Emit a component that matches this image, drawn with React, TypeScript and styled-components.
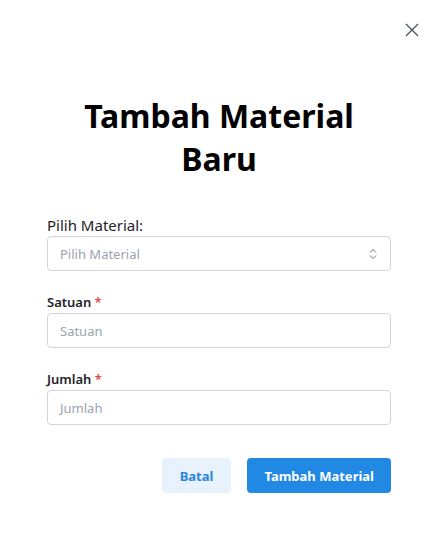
import React from "react";
import styled, { createGlobalStyle } from "styled-components";

const Global = createGlobalStyle`
  html, body { margin: 0; padding: 0; background: #fff; }
  body { font-family: "Noto Sans", "Open Sans", sans-serif; color: #1f2328; }
  * { box-sizing: border-box; }
`;

const Modal = styled.div`
  position: relative;
  width: 436px;
  height: 540px;
  background: #fff;
  padding: 94px 45px 0 47px;
  display: flex;
  flex-direction: column;
`;

const Close = styled.button`
  position: absolute;
  top: 22px;
  right: 16px;
  width: 16px;
  height: 16px;
  border: none;
  background: none;
  padding: 0;
  cursor: pointer;
  color: #4b5563;
  display: flex;
`;

const Title = styled.h2`
  margin: 0 0 35px;
  text-align: center;
  font-size: 32px;
  font-weight: 700;
  line-height: 43px;
  color: #000;
`;

const Field = styled.div`
  display: flex;
  flex-direction: column;
  gap: 1px;
  margin-bottom: 21px;
`;

const Label = styled.label<{ $plain?: boolean }>`
  font-size: ${(p) => (p.$plain ? "15px" : "13px")};
  font-weight: ${(p) => (p.$plain ? 400 : 600)};
  line-height: 20px;
  color: #1f2328;
`;

const Star = styled.span`
  color: #ef4444;
`;

const InputBox = styled.div`
  height: 35px;
  border: 1px solid #d1d5db;
  border-radius: 4px;
  display: flex;
  align-items: center;
  justify-content: space-between;
  padding: 0 12px;
  font-size: 13px;
  color: #9ca3af;
`;

const Actions = styled.div`
  display: flex;
  justify-content: flex-end;
  gap: 16px;
  margin-top: 12px;
`;

const Btn = styled.button<{ $primary?: boolean }>`
  height: 35px;
  border: none;
  border-radius: 4px;
  font-family: inherit;
  font-size: 13px;
  font-weight: 700;
  padding: 0 ${(p) => (p.$primary ? "17px" : "18px")};
  background: ${(p) => (p.$primary ? "#2188e3" : "#e8f2fc")};
  color: ${(p) => (p.$primary ? "#fff" : "#2a86e0")};
`;

export default function App() {
  return (
    <>
      <Global />
      <Modal>
        <Close aria-label="close">
          <svg width="16" height="16" viewBox="0 0 16 16" fill="none" stroke="currentColor" strokeWidth="1.4">
            <path d="M2 2 L14 14 M14 2 L2 14" />
          </svg>
        </Close>
        <Title>Tambah Material<br />Baru</Title>
        <Field>
          <Label $plain>Pilih Material:</Label>
          <InputBox>
            Pilih Material
            <svg width="10" height="12" viewBox="0 0 10 12" fill="none" stroke="#6b7280" strokeWidth="1">
              <path d="M2 4.5 L5 1.5 L8 4.5 M2 7.5 L5 10.5 L8 7.5" />
            </svg>
          </InputBox>
        </Field>
        <Field>
          <Label>Satuan <Star>*</Star></Label>
          <InputBox>Satuan</InputBox>
        </Field>
        <Field>
          <Label>Jumlah <Star>*</Star></Label>
          <InputBox>Jumlah</InputBox>
        </Field>
        <Actions>
          <Btn>Batal</Btn>
          <Btn $primary>Tambah Material</Btn>
        </Actions>
      </Modal>
    </>
  );
}
